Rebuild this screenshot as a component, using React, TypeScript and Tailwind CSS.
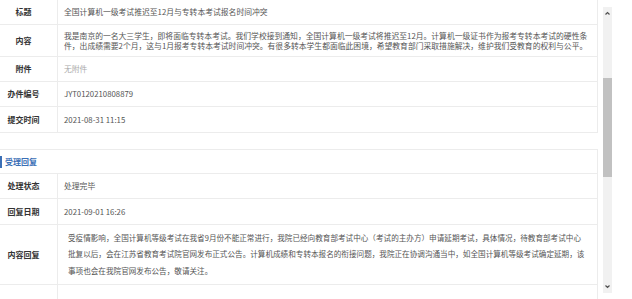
const font = { fontFamily: '"Noto Sans CJK SC", "Microsoft YaHei", sans-serif' };

function Row({
  label,
  children,
  h,
  muted,
}: {
  label: string;
  children?: React.ReactNode;
  h: string;
  muted?: boolean;
}) {
  return (
    <div className={`flex border-b border-[#ececec] ${h}`}>
      <div className="flex w-[58px] shrink-0 items-center justify-center border-r border-[#ececec] pr-[10px] text-[8px] font-bold text-[#333]">
        {label}
      </div>
      <div
        className={`flex flex-1 items-center px-[6px] text-[7.8px] leading-[10px] ${
          muted ? "text-[#aaa]" : "text-[#555]"
        }`}
      >
        {children}
      </div>
    </div>
  );
}

export default function App() {
  return (
    <div className="flex h-[299px] w-[632px] overflow-hidden bg-white" style={font}>
      <div className="w-[598px] shrink-0">
        <div className="border-r border-[#ececec]">
          <Row label="标题" h="h-[25px]">
            全国计算机一级考试推迟至12月与专转本考试报名时间冲突
          </Row>
          <Row label="内容" h="h-[32px]">
            <p>
              我是南京的一名大三学生，即将面临专转本考试。我们学校接到通知，全国计算机一级考试将推迟至12月。计算机一级证书作为报考专转本考试的硬性条件，出成绩需要2个月，这与1月报考专转本考试时间冲突。有很多转本学生都面临此困境，希望教育部门采取措施解决，维护我们受教育的权利与公平。
            </p>
          </Row>
          <Row label="附件" h="h-[25px]" muted>
            无附件
          </Row>
          <Row label="办件编号" h="h-[25px]">
            JYT0120210808879
          </Row>
          <Row label="提交时间" h="h-[26px]">
            2021-08-31 11:15
          </Row>
        </div>

        <div className="mt-[16px] border-r border-t border-[#ececec]">
          <div className="flex h-[24px] items-center border-b border-[#ececec]">
            <div className="h-[12px] w-[2px] bg-[#3b6fb6]" />
            <span className="ml-[3px] text-[8px] font-bold text-[#3b6fb6]">受理回复</span>
          </div>
          <Row label="处理状态" h="h-[25px]">
            处理完毕
          </Row>
          <Row label="回复日期" h="h-[26px]">
            2021-09-01 16:26
          </Row>
          <Row label="内容回复" h="h-[60px]">
            <p className="pl-[4px] pr-[6px] text-[7.6px] leading-[16.5px]">
              受疫情影响，全国计算机等级考试在我省9月份不能正常进行，我院已经向教育部考试中心（考试的主办方）申请延期考试，具体情况，待教育部考试中心批复以后，会在江苏省教育考试院官网发布正式公告。计算机成绩和专转本报名的衔接问题，我院正在协调沟通当中，如全国计算机等级考试确定延期，该事项也会在我院官网发布公告，敬请关注。
            </p>
          </Row>
          <div className="flex h-[20px]">
            <div className="w-[58px] border-r border-[#ececec]" />
          </div>
        </div>
      </div>

      <div className="ml-[5px] mt-[7px] flex h-[286px] w-[9px] flex-col items-center bg-[#f1f1f1]">
        <svg width="9" height="12" viewBox="0 0 9 12" className="shrink-0">
          <path d="M2.5 7.5 L4.5 5.5 L6.5 7.5" fill="none" stroke="#505050" strokeWidth="1.2" />
        </svg>
        <div className="mt-[59px] h-[99px] w-full bg-[#c1c1c1]" />
        <div className="flex-1" />
        <svg width="9" height="12" viewBox="0 0 9 12" className="shrink-0">
          <path d="M2.5 4.5 L4.5 6.5 L6.5 4.5" fill="none" stroke="#505050" strokeWidth="1.2" />
        </svg>
      </div>
    </div>
  );
}
